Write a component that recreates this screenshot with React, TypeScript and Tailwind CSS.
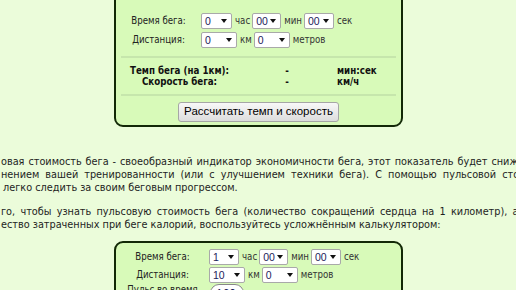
const Arrow = () => (
  <svg width="6" height="4" viewBox="0 0 6 4" className="shrink-0">
    <polygon points="0,0 6,0 3,4" fill="#111" />
  </svg>
)

function Sel({ v, w }: { v: string; w: string }) {
  return (
    <div className={`${w} h-[16px] bg-white border border-[#a9a9a9] rounded-[2px] flex items-center justify-between pl-[3px] pr-[4px] text-[10.5px] leading-none text-[#1d1d5a] font-['Liberation_Sans',sans-serif]`}>
      <span>{v}</span>
      <Arrow />
    </div>
  )
}

const Unit = ({ t }: { t: string }) => <span className="ml-[3px] mr-[2px] text-[#333]">{t}</span>

const Divider = () => <div className="mx-[5px] h-[2px] bg-[#c6e6ac]" />

export default function App() {
  return (
    <div className="w-[516px] h-[290px] overflow-hidden bg-[#ebfcda] text-[#222]">
      {/* калькулятор темпа */}
      <div className="ml-[114px] -mt-[4px] w-[289px] border-2 border-[#122806] rounded-b-[9px] bg-[#d8fab9] pt-[15px] pb-[3px] font-['DejaVu_Sans_Condensed',sans-serif] text-[9.6px]">
        <div className="flex items-center">
          <div className="w-[85px] text-center">Время бега:</div>
          <Sel v="0" w="w-[31px]" />
          <Unit t="час" />
          <Sel v="00" w="w-[29px]" />
          <Unit t="мин" />
          <Sel v="00" w="w-[30px]" />
          <Unit t="сек" />
        </div>
        <div className="flex items-center mt-[3px]">
          <div className="w-[85px] text-center">Дистанция:</div>
          <Sel v="0" w="w-[36px]" />
          <Unit t="км" />
          <Sel v="0" w="w-[36px]" />
          <Unit t="метров" />
        </div>
        <div className="mt-[8px]">
          <Divider />
        </div>
        <div className="grid grid-cols-[127px_88px_1fr] font-bold text-[9.7px] leading-[11px] text-[#111] mt-[7px] mb-[7px]">
          <div className="text-center">Темп бега (на 1км):</div>
          <div className="text-center">-</div>
          <div className="pl-[6px]">мин:сек</div>
          <div className="text-center">Скорость бега:</div>
          <div className="text-center">-</div>
          <div className="pl-[6px]">км/ч</div>
        </div>
        <Divider />
        <div className="flex justify-center mt-[6px]">
          <button className="h-[20px] px-[5px] border border-[#a6a6a6] rounded-[3px] bg-gradient-to-b from-[#f8f8f8] to-[#dddddd] text-[11.5px] leading-none text-black font-['Liberation_Sans',sans-serif]">
            Рассчитать темп и скорость
          </button>
        </div>
      </div>

      {/* текст */}
      <div className="mt-[28px] font-['DejaVu_Sans_Condensed',sans-serif] text-[10.8px] leading-[13px] text-[#1e1e1e]">
        <div className="w-[556px] pl-[1px] text-justify [text-align-last:justify]">
          овая стоимость бега - своеобразный индикатор экономичности бега, этот показатель будет снижаться с
        </div>
        <div className="w-[556px] pl-[1px] text-justify [text-align-last:justify]">
          нением вашей тренированности (или с улучшением техники бега). С помощью пульсовой стоимости
        </div>
        <div className="pl-[3px]">легко следить за своим беговым прогрессом.</div>
        <div className="mt-[11px] w-[556px] pl-[1px] text-justify [text-align-last:justify]">
          го, чтобы узнать пульсовую стоимость бега (количество сокращений сердца на 1 километр), а также
        </div>
        <div className="pl-[1px]">ество затраченных при беге калорий, воспользуйтесь усложнённым калькулятором:</div>
      </div>

      {/* усложнённый калькулятор */}
      <div className="ml-[114px] mt-[10px] w-[289px] border-2 border-[#122806] rounded-[9px] bg-[#d8fab9] pt-[6px] pb-[10px] font-['DejaVu_Sans_Condensed',sans-serif] text-[9.6px]">
        <div className="flex items-center">
          <div className="w-[93px] text-center">Время бега:</div>
          <Sel v="1" w="w-[30px]" />
          <Unit t="час" />
          <Sel v="00" w="w-[29px]" />
          <Unit t="мин" />
          <Sel v="00" w="w-[30px]" />
          <Unit t="сек" />
        </div>
        <div className="flex items-center mt-[2px]">
          <div className="w-[93px] text-center">Дистанция:</div>
          <Sel v="10" w="w-[36px]" />
          <Unit t="км" />
          <Sel v="0" w="w-[36px]" />
          <Unit t="метров" />
        </div>
        <div className="flex items-start mt-[1px]">
          <div className="w-[93px] text-center leading-[11px]">Пульс во время бега:</div>
          <div className="ml-[1px] w-[34px] h-[18px] bg-white border border-[#888] rounded-full px-[5px] text-[12px] text-[#1d1d5a] font-['Liberation_Sans',sans-serif]">160</div>
        </div>
      </div>
    </div>
  )
}
